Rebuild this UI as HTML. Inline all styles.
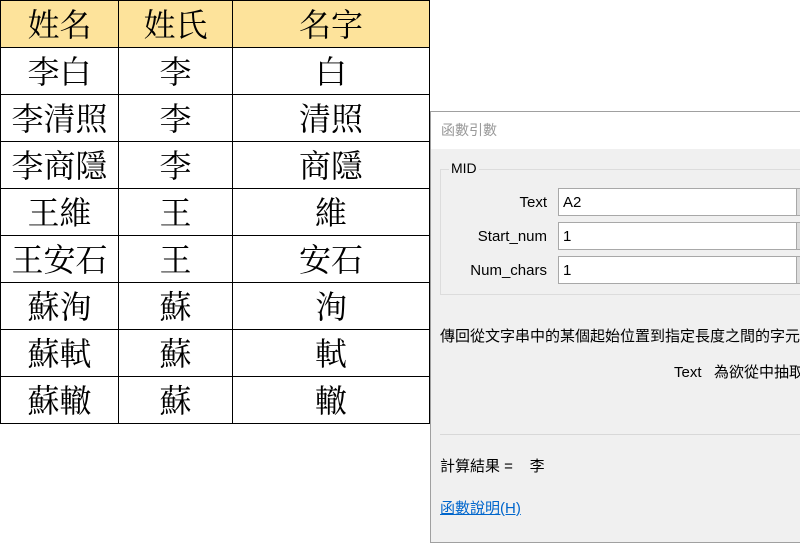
<!DOCTYPE html>
<html><head><meta charset="utf-8"><style>
body{margin:0;width:800px;height:533px;background:#fff;position:relative;overflow:hidden;font-family:"Liberation Sans","Noto Sans CJK TC",sans-serif;}
table{position:absolute;left:0;top:0;border-collapse:collapse;font-family:"Liberation Serif","Noto Serif CJK SC",serif;font-size:32px;}
td{border:1px solid #000;height:46px;padding:3px 0 0 0;box-sizing:border-box;text-align:center;line-height:43px;}
tr.h td{background:#fde39b;}
.dlg{position:absolute;left:430px;top:111px;width:380px;height:430px;background:#f0f0f0;border:1px solid #a0a0a0;}
.title{height:37px;background:#fff;color:#999;font-size:14px;line-height:37px;padding-left:10px;}
.grp{position:absolute;left:9px;top:57px;width:380px;height:124px;border:1px solid #dcdcdc;}
.grp .lg{position:absolute;left:8px;top:-10px;background:#f0f0f0;font-size:14px;padding:0 2px;color:#000;}
.in{position:absolute;left:127px;width:236px;height:26px;background:#fff;border:1px solid #a8a8a8;font-size:15px;line-height:28px;padding-left:4px;box-sizing:content-box;}
.btn{position:absolute;left:365px;width:8px;height:26px;background:#ddd;border:1px solid #a8a8a8;}
.t{position:absolute;font-size:15px;white-space:nowrap;color:#000;}
</style></head><body>
<table>
<colgroup><col style="width:118px"><col style="width:114px"><col style="width:197px"></colgroup>
<tr class="h"><td>姓名</td><td>姓氏</td><td>名字</td></tr>
<tr><td>李白</td><td>李</td><td>白</td></tr>
<tr><td>李清照</td><td>李</td><td>清照</td></tr>
<tr><td>李商隱</td><td>李</td><td>商隱</td></tr>
<tr><td>王維</td><td>王</td><td>維</td></tr>
<tr><td>王安石</td><td>王</td><td>安石</td></tr>
<tr><td>蘇洵</td><td>蘇</td><td>洵</td></tr>
<tr><td>蘇軾</td><td>蘇</td><td>軾</td></tr>
<tr><td>蘇轍</td><td>蘇</td><td>轍</td></tr>
</table>
<div class="dlg">
<div class="title">函數引數</div>
<div class="grp"><div class="lg">MID</div></div>
<div class="t" style="left:0;width:116px;text-align:right;top:82px">Text</div>
<div class="t" style="left:0;width:116px;text-align:right;top:116px">Start_num</div>
<div class="t" style="left:0;width:116px;text-align:right;top:150px">Num_chars</div>
<div class="in" style="top:76px">A2</div><div class="btn" style="top:76px"></div>
<div class="in" style="top:110px">1</div><div class="btn" style="top:110px"></div>
<div class="in" style="top:144px">1</div><div class="btn" style="top:144px"></div>
<div class="t" style="left:9px;top:213px">傳回從文字串中的某個起始位置到指定長度之間的字元</div>
<div class="t" style="left:243px;top:249px">Text&nbsp;&nbsp;&nbsp;為欲從中抽取</div>
<div style="position:absolute;left:9px;top:322px;width:380px;height:1px;background:#d8d8d8"></div>
<div class="t" style="left:9px;top:343px">計算結果 =&nbsp;&nbsp;&nbsp;&nbsp;李</div>
<div class="t" style="left:9px;top:385px;color:#0066cc;text-decoration:underline">函數說明(H)</div>
</div>
</body></html>
